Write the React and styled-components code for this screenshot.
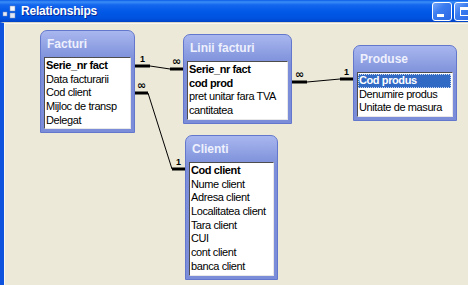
import React from 'react'
import styled, { createGlobalStyle } from 'styled-components'

const GlobalStyle = createGlobalStyle`
  html, body {
    margin: 0;
    padding: 0;
    background: #ece9d8;
  }
  #root {
    width: 468px;
    height: 285px;
    overflow: hidden;
  }
`

// canvas origin in page coordinates (left frame 4px, title bar 22px + 1px edge)
const OX = 4
const OY = 23

const Window = styled.div`
  width: 478px;
  height: 285px;
  display: flex;
  flex-direction: column;
  font-family: "Liberation Sans", Arial, sans-serif;
`

const TitleBar = styled.div`
  height: 22px;
  flex: none;
  display: flex;
  align-items: center;
  gap: 4px;
  padding: 0 4px 0 2px;
  background: linear-gradient(
    180deg,
    #0a5de6 0%,
    #3d8ef7 9%,
    #1466ee 22%,
    #0058e6 55%,
    #0052de 85%,
    #0042c6 100%
  );
`

const Caption = styled.span`
  flex: 1;
  color: #fff;
  font-size: 12px;
  font-weight: bold;
  letter-spacing: -0.2px;
  text-shadow: 1px 1px 0 #0b2a9a;
`

const CaptionButtons = styled.div`
  display: flex;
  gap: 2px;
`

const CaptionButton = styled.div`
  width: 20px;
  height: 19px;
  box-sizing: border-box;
  border: 1px solid #fff;
  border-radius: 3px;
  display: flex;
  align-items: ${p => (p.$kind === 'min' ? 'flex-end' : 'center')};
  justify-content: ${p => (p.$kind === 'min' ? 'flex-start' : 'center')};
  padding: ${p => (p.$kind === 'min' ? '0 0 3px 4px' : '0')};
  background: linear-gradient(135deg, #77a6f8 0%, #3b7cf0 40%, #2a66e4 100%);
`

const MinGlyph = styled.span`
  width: 7px;
  height: 3px;
  background: #fff;
`

const MaxGlyph = styled.span`
  width: 9px;
  height: 9px;
  box-sizing: border-box;
  border: 1px solid #fff;
  border-top-width: 3px;
`

const Canvas = styled.div`
  position: relative;
  flex: 1;
  background: #ece9d8;
  border-left: ${OX}px solid #0d53dd;
  border-top: 1px solid #d9d5c6;
  box-shadow: inset 1px 1px 0 #f8f7f1;
`

const Links = styled.svg`
  position: absolute;
  left: 0;
  top: 0;
`

const TableFrame = styled.div`
  position: absolute;
  left: ${p => p.$x - OX}px;
  top: ${p => p.$y - OY}px;
  width: ${p => p.$w}px;
  box-sizing: border-box;
  border: 1px solid #6377cc;
  border-radius: 7px 7px 0 0;
  padding: 0 3px 3px;
  background: linear-gradient(180deg, #a9b7ef 0%, #8698de 22px, #7c8ed9 30px, #7b8cd8 100%);
`

const TableTitle = styled.div`
  height: 26px;
  display: flex;
  align-items: center;
  padding-left: 3px;
  color: #eef0fd;
  font-size: 12px;
  font-weight: bold;
`

const FieldList = styled.div`
  background: #fff;
  border: 1px solid;
  border-color: #4d4d4d #e8e8e8 #e8e8e8 #4d4d4d;
  padding: 1px 0;
`

const Field = styled.div`
  height: 13.7px;
  line-height: 13.7px;
  padding-left: 1px;
  margin: 0 1px 0 0;
  font-size: 11px;
  letter-spacing: -0.4px;
  white-space: nowrap;
  color: ${p => (p.$selected ? '#fff' : '#000')};
  font-weight: ${p => (p.$key ? 'bold' : 'normal')};
  background: ${p => (p.$selected ? '#316ac5' : 'transparent')};
  outline: ${p => (p.$selected ? '1px dotted #c9d6f0' : 'none')};
  outline-offset: -1px;
`

const tables = [
  {
    name: 'Facturi',
    x: 40, y: 30, w: 95,
    fields: [
      { label: 'Serie_nr fact', key: true },
      { label: 'Data facturarii' },
      { label: 'Cod client' },
      { label: 'Mijloc de transp' },
      { label: 'Delegat' },
    ],
  },
  {
    name: 'Linii facturi',
    x: 183, y: 34, w: 109,
    fields: [
      { label: 'Serie_nr fact', key: true },
      { label: 'cod prod', key: true },
      { label: 'pret unitar fara TVA' },
      { label: 'cantitatea' },
    ],
  },
  {
    name: 'Produse',
    x: 353, y: 45, w: 104,
    fields: [
      { label: 'Cod produs', key: true, selected: true },
      { label: 'Denumire produs' },
      { label: 'Unitate de masura' },
    ],
  },
  {
    name: 'Clienti',
    x: 185, y: 135, w: 93,
    fields: [
      { label: 'Cod client', key: true },
      { label: 'Nume client' },
      { label: 'Adresa client' },
      { label: 'Localitatea client' },
      { label: 'Tara client' },
      { label: 'CUI' },
      { label: 'cont client' },
      { label: 'banca client' },
    ],
  },
]

// join lines in page coordinates
const links = [
  {
    a: [135, 66], b: [150, 66], c: [170, 69], d: [183, 69],
    from: '1', to: '∞',
  },
  {
    a: [135, 93], b: [148, 93], c: [172, 169], d: [185, 169],
    from: '∞', to: '1',
  },
  {
    a: [292, 82], b: [307, 82], c: [340, 79], d: [353, 79],
    from: '∞', to: '1',
  },
]

const Label = ({ x, y, text }) => (
  <text
    x={x}
    y={y}
    textAnchor="middle"
    fontFamily={text === '∞' ? '"DejaVu Sans", sans-serif' : '"Liberation Sans", Arial, sans-serif'}
    fontWeight="bold"
    fontSize={text === '∞' ? 11 : 9}
    fill="#000"
  >
    {text}
  </text>
)

const AppIcon = () => (
  <svg width="15" height="16" viewBox="0 0 15 16">
    <rect x="1" y="9" width="4" height="4" fill="#e6ecf8" stroke="#7f8fb8" strokeWidth="0.5" />
    <rect x="8" y="3" width="5" height="5" fill="#f4f6fb" stroke="#7f8fb8" strokeWidth="0.5" />
    <rect x="8" y="10" width="5" height="5" fill="#dfe6f5" stroke="#7f8fb8" strokeWidth="0.5" />
  </svg>
)

const Table = ({ name, x, y, w, fields }) => (
  <TableFrame $x={x} $y={y} $w={w}>
    <TableTitle>{name}</TableTitle>
    <FieldList>
      {fields.map(f => (
        <Field key={f.label} $key={f.key} $selected={f.selected}>
          {f.label}
        </Field>
      ))}
    </FieldList>
  </TableFrame>
)

const App = () => (
  <>
    <GlobalStyle />
    <Window>
      <TitleBar>
        <AppIcon />
        <Caption>Relationships</Caption>
        <CaptionButtons>
          <CaptionButton $kind="min"><MinGlyph /></CaptionButton>
          <CaptionButton $kind="max"><MaxGlyph /></CaptionButton>
        </CaptionButtons>
      </TitleBar>
      <Canvas>
        <Links width="474" height="262" viewBox={`${OX} ${OY} 474 262`}>
          {links.map((l, i) => (
            <g key={i}>
              <line x1={l.a[0]} y1={l.a[1]} x2={l.b[0]} y2={l.b[1]} stroke="#000" strokeWidth="3" />
              <line x1={l.b[0]} y1={l.b[1]} x2={l.c[0]} y2={l.c[1]} stroke="#000" strokeWidth="1" />
              <line x1={l.c[0]} y1={l.c[1]} x2={l.d[0]} y2={l.d[1]} stroke="#000" strokeWidth="3" />
              <Label x={(l.a[0] + l.b[0]) / 2} y={l.a[1] - 4} text={l.from} />
              <Label x={(l.c[0] + l.d[0]) / 2} y={l.c[1] - 4} text={l.to} />
            </g>
          ))}
        </Links>
        {tables.map(t => (
          <Table key={t.name} {...t} />
        ))}
      </Canvas>
    </Window>
  </>
)

export default App
